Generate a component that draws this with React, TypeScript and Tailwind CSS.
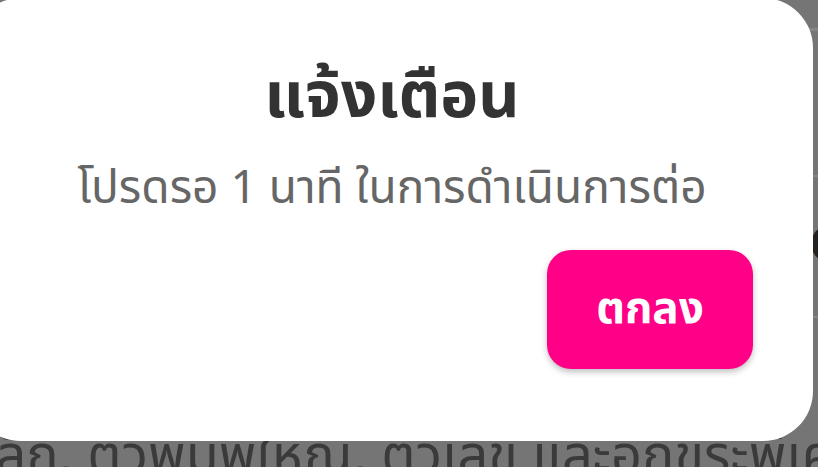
import React from 'react';

const thai = { fontFamily: '"Noto Sans Thai", "Noto Sans", "Liberation Sans", sans-serif' };

export default function App() {
  return (
    <div className="relative h-[467px] w-full overflow-hidden bg-[#757575]" style={thai}>
      {/* page behind the overlay */}
      <div className="flex flex-col">
        <div className="h-[28px]" />
        <div className="h-[3px] bg-[#858585]" />
        <div className="h-[144px]" />
        <div className="h-[2px] bg-[#858585]" />
        <div className="flex h-[139px] items-center justify-end">
          <span className="mr-[-26px] text-[44px] font-bold leading-none text-[#222]">O</span>
        </div>
        <div className="h-[2px] bg-[#858585]" />
        <div className="h-[107px]" />
        <div className="ml-[-20px] whitespace-nowrap text-[54px] leading-[64px] text-[#3a3a3a]">
          เล็ก, ตัวพิมพ์ใหญ่, ตัวเลข และอักขระพิเศษ
        </div>
      </div>

      {/* alert dialog */}
      <div className="absolute left-[-29px] top-[-2px] flex h-[443px] w-[842px] flex-col rounded-[50px] bg-white">
        <h1 className="mt-[62px] text-center text-[64px] font-bold leading-[76px] text-[#333333]">
          แจ้งเตือน
        </h1>
        <p className="mt-[25px] text-center text-[46px] leading-[56px] text-[#666666]">
          โปรดรอ 1 นาที ในการดำเนินการต่อ
        </p>
        <div className="mt-[33px] flex justify-end pr-[60px]">
          <button className="flex h-[119px] w-[206px] items-center justify-center rounded-[24px] bg-[#ff0087] text-[44px] font-bold text-white shadow-[0_3px_6px_rgba(0,0,0,0.25)]">
            ตกลง
          </button>
        </div>
      </div>
    </div>
  );
}
